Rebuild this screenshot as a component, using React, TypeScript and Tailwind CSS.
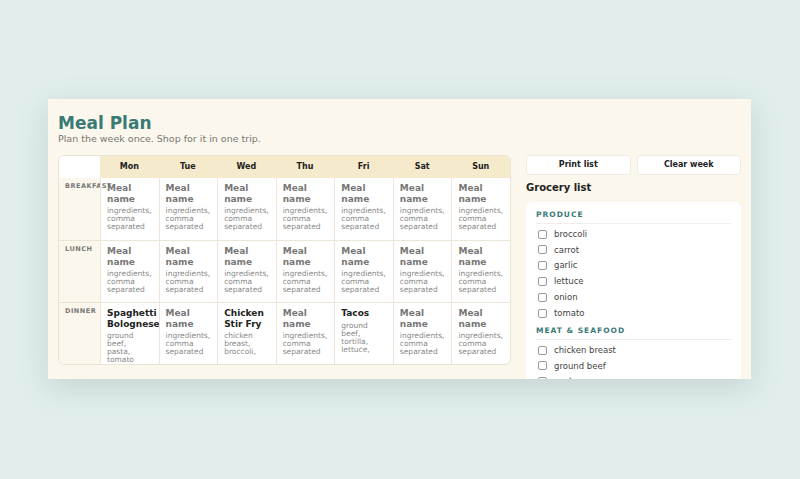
const days = ["Mon","Tue","Wed","Thu","Fri","Sat","Sun"];
type M = { n: string; i: string; set?: boolean };
const def: M = { n: "Meal name", i: "ingredients, comma separated" };
const rows: { label: string; meals: M[] }[] = [
  { label: "Breakfast", meals: days.map(() => def) },
  { label: "Lunch", meals: days.map(() => def) },
  { label: "Dinner", meals: [
    { n: "Spaghetti Bolognese", i: "ground beef, pasta, tomato", set: true },
    def,
    { n: "Chicken Stir Fry", i: "chicken breast, broccoli,", set: true },
    def,
    { n: "Tacos", i: "ground beef, tortilla, lettuce,", set: true },
    def, def,
  ] },
];
const groups = [
  { t: "Produce", items: ["broccoli","carrot","garlic","lettuce","onion","tomato"] },
  { t: "Meat & Seafood", items: ["chicken breast","ground beef","pasta"] },
];
export default function App() {
  return (
    <div className="w-[800px] h-[479px] bg-[#e1eeec] pt-[99px] pl-[48px]" style={{ fontFamily: '"DejaVu Sans", sans-serif' }}>
      <div className="w-[703px] h-[280px] overflow-hidden bg-[#fbf7ec] shadow-[0_8px_30px_rgba(60,90,90,0.18)] pl-[10px] pr-[10px] pt-[14px] flex flex-col">
        <h1 className="text-[17px] font-bold text-[#3a7a76] leading-[20px]">Meal Plan</h1>
        <p className="text-[9.5px] text-[#777] leading-[12px]">Plan the week once. Shop for it in one trip.</p>
        <div className="flex gap-[15px] mt-[10px]">
          <div className="w-[453px] shrink-0 rounded-[6px] border border-[#ece4d2] overflow-hidden bg-white self-start">
            <div className="grid grid-cols-[41px_repeat(7,minmax(0,1fr))]">
              <div className="bg-white h-[22px]" />
              {days.map(d => <div key={d} className="bg-[#f6eacd] h-[22px] flex items-center justify-center text-[8px] font-bold text-[#222]">{d}</div>)}
              {rows.map((r, ri) => (
                <>
                  <div key={r.label} className={`bg-[#fbf7ec] pl-[6px] pt-[4px] text-[6.5px] font-bold tracking-[0.5px] uppercase text-[#777] h-[62px] ${ri ? "border-t border-[#ece4d2]" : ""}`}>{r.label}</div>
                  {r.meals.map((m, i) => (
                    <div key={i} className={`border-l border-[#ece6da] pl-[6px] pr-[8px] pt-[5px] h-[62px] ${ri ? "border-t border-[#ece4d2]" : ""}`}>
                      <div className={`text-[9px] font-bold leading-[10.5px] ${m.set ? "text-[#222]" : "text-[#777]"}`}>{m.n}</div>
                      <div className="text-[7.5px] text-[#888] leading-[8px] mt-[3px]">{m.i}</div>
                    </div>
                  ))}
                </>
              ))}
            </div>
          </div>
          <div className="w-[215px] flex flex-col">
            <div className="flex gap-[6px]">
              {["Print list","Clear week"].map(b => <button key={b} className="flex-1 h-[20px] bg-white rounded-[4px] border border-[#f0ebe0] text-[8px] font-bold text-[#222]">{b}</button>)}
            </div>
            <h2 className="text-[10px] font-bold text-[#222] mt-[7px] leading-[12px]">Grocery list</h2>
            <div className="mt-[8px] bg-white rounded-[6px] px-[10px] pt-[7px]">
              {groups.map((g, gi) => (
                <div key={g.t} className={gi ? "mt-[4px]" : ""}>
                  <div className="text-[7.5px] font-bold tracking-[1px] uppercase text-[#3a7a76] pb-[3px] border-b border-[#eee]">{g.t}</div>
                  <div className="pt-[2px]">
                    {g.items.map(it => (
                      <div key={it} className="flex items-center h-[15.8px] gap-[7px] pl-[2px]">
                        <span className="w-[9px] h-[9px] border border-[#999] rounded-[2px]" />
                        <span className="text-[8.5px] text-[#444]">{it}</span>
                      </div>
                    ))}
                  </div>
                </div>
              ))}
            </div>
          </div>
        </div>
      </div>
    </div>
  );
}
